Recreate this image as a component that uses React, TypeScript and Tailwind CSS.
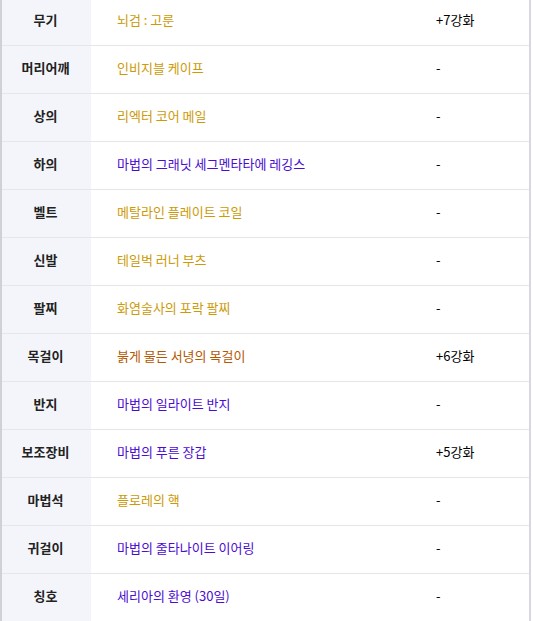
import React from 'react';

type Row = { slot: string; name: string; color: string; star: string };

const GOLD = 'text-[#cc9a06]';
const PURPLE = 'text-[#4a0cd0]';
const ORANGE = 'text-[#b35800]';

const rows: Row[] = [
  { slot: '무기', name: '뇌검 : 고룬', color: GOLD, star: '+7강화' },
  { slot: '머리어깨', name: '인비지블 케이프', color: GOLD, star: '-' },
  { slot: '상의', name: '리엑터 코어 메일', color: GOLD, star: '-' },
  { slot: '하의', name: '마법의 그래닛 세그멘타타에 레깅스', color: PURPLE, star: '-' },
  { slot: '벨트', name: '메탈라인 플레이트 코일', color: GOLD, star: '-' },
  { slot: '신발', name: '테일벅 러너 부츠', color: GOLD, star: '-' },
  { slot: '팔찌', name: '화염술사의 포락 팔찌', color: GOLD, star: '-' },
  { slot: '목걸이', name: '붉게 물든 서녕의 목걸이', color: ORANGE, star: '+6강화' },
  { slot: '반지', name: '마법의 일라이트 반지', color: PURPLE, star: '-' },
  { slot: '보조장비', name: '마법의 푸른 장갑', color: PURPLE, star: '+5강화' },
  { slot: '마법석', name: '플로레의 핵', color: GOLD, star: '-' },
  { slot: '귀걸이', name: '마법의 줄타나이트 이어링', color: PURPLE, star: '-' },
  { slot: '칭호', name: '세리아의 환영 (30일)', color: PURPLE, star: '-' },
];

export default function App() {
  return (
    <div className="h-[621px] overflow-hidden bg-white" style={{ fontFamily: '"Noto Sans CJK KR", "Noto Sans", sans-serif' }}>
      <div className="-mt-[2px] w-[531px] border-l-2 border-r-2 border-l-[#cfd0d8] border-r-[#d8d8e4]">
        {rows.map((r) => (
          <div key={r.slot} className="grid grid-cols-[89px_325px_1fr] h-[48px] border-b border-[#e6e6ea] text-[13px] leading-none">
            <div className="bg-[#f4f5fa] flex items-center justify-center pb-1 pr-[2px] font-bold text-[#222]">{r.slot}</div>
            <div className={`flex items-center pb-1 pl-[26px] ${r.color}`}>{r.name}</div>
            <div className="flex items-center pb-1 pl-[20px] text-black">{r.star}</div>
          </div>
        ))}
      </div>
    </div>
  );
}
